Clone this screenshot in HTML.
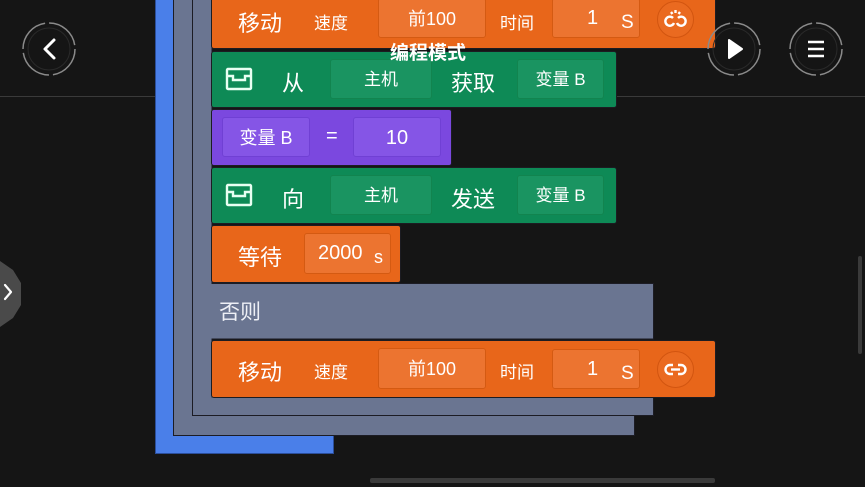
<!DOCTYPE html>
<html><head><meta charset="utf-8"><style>
*{margin:0;padding:0;box-sizing:border-box}
body{width:865px;height:487px;overflow:hidden;background:#151515;position:relative;font-family:"Liberation Sans","Noto Sans CJK SC",sans-serif;color:#fff}
.a{position:absolute}
.blk{position:absolute;border:1px solid #1c1c22;border-radius:3px}
.or{background:#e8661a}
.gr{background:#0e8a56}
.pu{background:#7b48df}
.in{position:absolute;border:1px solid rgba(0,0,0,.12);border-radius:3px;text-align:center;color:#fff}
.or .in{background:#ec7430;border-color:#d45a12}
.gr .in{background:#1a9461;border-color:#12844f}
.pu .in{background:#8555e6;border-color:#7040d4}
.t{position:absolute;white-space:nowrap}
.hl{position:absolute;height:1px;background:#3a3a3a;top:96px}
</style></head><body>
<div class="hl" style="left:0;width:156px"></div>
<div class="hl" style="left:616px;width:249px"></div>

<svg class="a" style="left:0;top:0" width="865" height="487">
 <path d="M155.5 -5H174V435H333.5V453.5H155.5Z" fill="#4a7fe9" stroke="#2b4e9a"/>
 <path d="M173.5 -5H193V415H634.5V435.5H173.5Z" fill="#6a7591" stroke="#1c1c24"/>
 <path d="M192.5 -5H212V283.5H653.5V339H212V397H653.5V415.5H192.5Z" fill="#6a7591" stroke="#1c1c24"/>
</svg>
<div class="t" style="left:219px;top:296px;font-size:21px;color:#eef0f6">否则</div>

<!-- orange top -->
<div class="blk or" style="left:211px;top:-5px;width:505px;height:54px">
 <div class="t" style="left:26px;top:10px;font-size:22px">移动</div>
 <div class="t" style="left:102px;top:13px;font-size:17px">速度</div>
 <div class="in" style="left:166px;top:2px;width:108px;height:40px;font-size:18px;line-height:40px">前100</div>
 <div class="t" style="left:288px;top:13px;font-size:17px">时间</div>
 <div class="in" style="left:340px;top:2px;width:88px;height:40px"><span class="t" style="left:34px;top:8px;font-size:20px">1</span><span class="t" style="left:68px;top:13px;font-size:19px">S</span></div>
 <div class="a" style="left:445px;top:5px;width:37px;height:37px;border-radius:50%;border:1px solid #d25510;background:#ea6a20">
  <svg width="37" height="37" viewBox="0 0 37 37" style="position:absolute;left:-1px;top:-1px"><g fill="none" stroke="#fff" stroke-width="2.4"><path d="M16 17a4.5 4.5 0 1 0 1 5"/><path d="M21 17a4.5 4.5 0 1 1 -1 5"/><path d="M18.5 9v3M14 11l1.5 2M23 11l-1.5 2"/></g></svg>
 </div>
</div>

<!-- green 1 -->
<div class="blk gr" style="left:211px;top:51px;width:406px;height:57px">
 <svg class="a" style="left:13px;top:15px" width="28" height="24" viewBox="0 0 28 24"><g fill="none" stroke="#e8fff2" stroke-width="2.4"><rect x="2" y="2" width="24" height="20" rx="1"/><path d="M2 9h6v4h12v-4h6"/></g></svg>
 <div class="t" style="left:70px;top:14px;font-size:22px">从</div>
 <div class="in" style="left:118px;top:7px;width:102px;height:40px;font-size:17px;line-height:40px">主机</div>
 <div class="t" style="left:239px;top:14px;font-size:22px">获取</div>
 <div class="in" style="left:305px;top:7px;width:87px;height:40px;font-size:17px;line-height:40px">变量 B</div>
</div>

<!-- purple -->
<div class="blk pu" style="left:211px;top:109px;width:241px;height:57px">
 <div class="in" style="left:10px;top:7px;width:88px;height:40px;font-size:18px;line-height:40px">变量 B</div>
 <div class="t" style="left:114px;top:15px;font-size:20px">=</div>
 <div class="in" style="left:141px;top:7px;width:88px;height:40px;font-size:20px;line-height:40px">10</div>
</div>

<!-- green 2 -->
<div class="blk gr" style="left:211px;top:167px;width:406px;height:57px">
 <svg class="a" style="left:13px;top:15px" width="28" height="24" viewBox="0 0 28 24"><g fill="none" stroke="#e8fff2" stroke-width="2.4"><rect x="2" y="2" width="24" height="20" rx="1"/><path d="M2 9h6v4h12v-4h6"/></g></svg>
 <div class="t" style="left:70px;top:14px;font-size:22px">向</div>
 <div class="in" style="left:118px;top:7px;width:102px;height:40px;font-size:17px;line-height:40px">主机</div>
 <div class="t" style="left:239px;top:14px;font-size:22px">发送</div>
 <div class="in" style="left:305px;top:7px;width:87px;height:40px;font-size:17px;line-height:40px">变量 B</div>
</div>

<!-- wait -->
<div class="blk or" style="left:211px;top:225px;width:190px;height:58px">
 <div class="t" style="left:26px;top:14px;font-size:22px">等待</div>
 <div class="in" style="left:92px;top:7px;width:87px;height:41px"><span class="t" style="left:13px;top:8px;font-size:20px">2000</span><span class="t" style="left:69px;top:13px;font-size:18px">s</span></div>
</div>

<!-- orange bottom -->
<div class="blk or" style="left:211px;top:340px;width:505px;height:58px">
 <div class="t" style="left:26px;top:14px;font-size:22px">移动</div>
 <div class="t" style="left:102px;top:17px;font-size:17px">速度</div>
 <div class="in" style="left:166px;top:7px;width:108px;height:41px;font-size:18px;line-height:41px">前100</div>
 <div class="t" style="left:288px;top:17px;font-size:17px">时间</div>
 <div class="in" style="left:340px;top:8px;width:88px;height:40px"><span class="t" style="left:34px;top:8px;font-size:20px">1</span><span class="t" style="left:68px;top:13px;font-size:19px">S</span></div>
 <div class="a" style="left:445px;top:10px;width:37px;height:37px;border-radius:50%;border:1px solid #d25510;background:#ea6a20">
  <svg width="37" height="37" viewBox="0 0 37 37" style="position:absolute;left:-1px;top:-1px"><g fill="none" stroke="#fff" stroke-width="2.4"><path d="M16 14h-3a4.5 4.5 0 0 0 0 9h3"/><path d="M21 14h3a4.5 4.5 0 0 1 0 9h-3"/><path d="M14 18.5h9"/></g></svg>
 </div>
</div>

<div class="t" style="left:390px;top:38px;font-size:19px;font-weight:bold;color:#fff">编程模式</div>

<!-- circle buttons -->
<svg class="a" style="left:0;top:0" width="865" height="100">
 <g fill="none" stroke="#8a8a8a" stroke-width="1.5">
  <circle cx="49" cy="49" r="26" stroke-dasharray="36.8 4"/>
  <circle cx="734" cy="49" r="26" stroke-dasharray="36.8 4"/>
  <circle cx="816" cy="49" r="26" stroke-dasharray="36.8 4"/>
 </g>
 <g fill="none" stroke="#2a2a2a" stroke-width="1">
  <circle cx="49" cy="49" r="21"/><circle cx="734" cy="49" r="21"/><circle cx="816" cy="49" r="21"/>
 </g>
 <path d="M54 40l-9 9 9 9" fill="none" stroke="#fff" stroke-width="3" stroke-linecap="round" stroke-linejoin="round"/>
 <path d="M729 40v18l13-9z" fill="#fff" stroke="#fff" stroke-width="2" stroke-linejoin="round"/>
 <g stroke="#fff" stroke-width="2.6"><path d="M808 42h16M808 49h16M808 56h16"/></g>
</svg>

<!-- left tab -->
<svg class="a" style="left:0;top:258px" width="24" height="72"><path d="M0 3L13 12L21 25V47L13 60L0 69Z" fill="#4a4a4a"/><path d="M5 27l6 7-6 7" fill="none" stroke="#fff" stroke-width="2.2" stroke-linecap="round" stroke-linejoin="round"/></svg>

<!-- scrollbars -->
<div class="a" style="left:858px;top:256px;width:4px;height:98px;background:#3a3a3a;border-radius:2px"></div>
<div class="a" style="left:370px;top:478px;width:345px;height:5px;background:#3a3a3a;border-radius:2px"></div>
</body></html>
